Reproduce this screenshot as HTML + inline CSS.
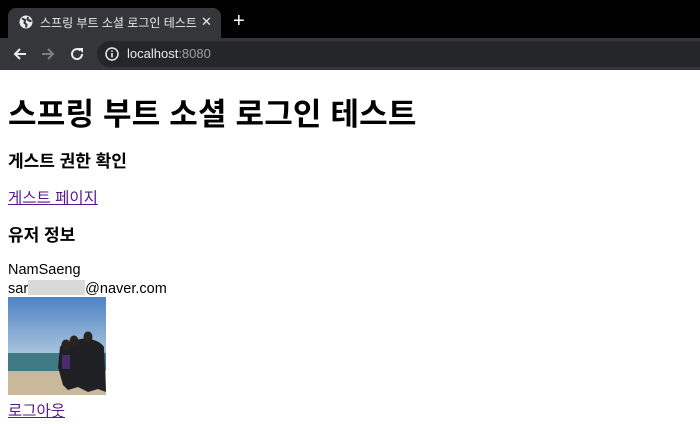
<!DOCTYPE html>
<html><head><meta charset="utf-8"><style>
body{margin:0;width:700px;height:425px;overflow:hidden;background:#fff;font-family:"Liberation Sans","Noto Sans CJK KR",sans-serif;position:relative}
.a{position:absolute;white-space:nowrap}
.tabbar{position:absolute;left:0;top:0;width:700px;height:38px;background:#000}
.tab{position:absolute;left:8px;top:8px;width:213px;height:30px;background:#35363a;border-radius:8px 8px 0 0}
.toolbar{position:absolute;left:0;top:38px;width:700px;height:32px;background:#35363a}
.omni{position:absolute;left:97px;top:41px;width:620px;height:26px;background:#252629;border-radius:13px}
a{color:#551a8b}
</style></head><body>
<div class="tabbar"></div>
<div class="tab"></div>
<svg class="a" style="left:19px;top:15px" width="14" height="14" viewBox="0 0 14 14"><circle cx="7" cy="7" r="6.5" fill="#e8eaed"/><path d="M3 3.5 L6 5 L5.5 8 L7.5 9.5 L7 12.5 M9 2 L8.5 4.5 L11 6 L12.5 5.5" stroke="#35363a" stroke-width="2" fill="none"/></svg>
<div class="a" style="left:40px;top:14px;font-size:12px;color:#e8eaed">스프링 부트 소셜 로그인 테스트</div>
<div class="a" style="left:201px;top:14px;font-size:13px;color:#e8eaed">✕</div>
<div class="a" style="left:233px;top:11px;font-size:20px;color:#fff;line-height:20px">+</div>
<div class="toolbar"></div>
<div class="omni"></div>
<svg class="a" style="left:12px;top:46px" width="16" height="16" viewBox="0 0 16 16"><path d="M14 8H3M8 3L3 8L8 13" stroke="#e8eaed" stroke-width="2" fill="none"/></svg>
<svg class="a" style="left:40px;top:46px" width="16" height="16" viewBox="0 0 16 16"><path d="M2 8H13M8 3L13 8L8 13" stroke="#7c7d80" stroke-width="2" fill="none"/></svg>
<svg class="a" style="left:69px;top:46px" width="16" height="16" viewBox="0 0 16 16"><path d="M13 8A5 5 0 1 1 11.5 4.5" stroke="#e8eaed" stroke-width="2" fill="none"/><path d="M9 2H14V7Z" fill="#e8eaed"/></svg>
<svg class="a" style="left:105px;top:47px" width="14" height="14" viewBox="0 0 14 14"><circle cx="7" cy="7" r="6" stroke="#e8eaed" stroke-width="1.5" fill="none"/><path d="M7 6V10.5M7 3.5V5" stroke="#e8eaed" stroke-width="1.6"/></svg>
<div class="a" style="left:127px;top:46px;font-size:13px;color:#e8eaed">localhost<span style="color:#9aa0a6">:8080</span></div>
<div class="a" style="left:8px;top:89px;font-size:31px;font-weight:bold;color:#000;letter-spacing:0.2px">스프링 부트 소셜 로그인 테스트</div>
<div class="a" style="left:8px;top:147px;font-size:17px;font-weight:bold">게스트 권한 확인</div>
<div class="a" style="left:8px;top:186px;font-size:15.5px"><a href="#">게스트 페이지</a></div>
<div class="a" style="left:8px;top:221px;font-size:17px;font-weight:bold">유저 정보</div>
<div class="a" style="left:8px;top:262px;font-size:14.5px">NamSaeng</div>
<div class="a" style="left:8px;top:280px;font-size:14.5px">sar<span style="display:inline-block;width:57px;height:15px;background:#d9d9d9;vertical-align:-2px"></span>@naver.com</div>
<svg class="a" style="left:8px;top:297px" width="98" height="98" viewBox="0 0 98 98">
<defs><linearGradient id="s" x1="0" y1="0" x2="0" y2="1"><stop offset="0" stop-color="#4f82c4"/><stop offset="1" stop-color="#a9c4de"/></linearGradient></defs>
<rect width="98" height="57" fill="url(#s)"/>
<rect y="56" width="98" height="20" fill="#3f7a85"/>
<rect y="74" width="98" height="24" fill="#c9b89a"/>
<path d="M52 50Q56 44 64 46Q72 40 82 42Q92 44 96 50L98 95L90 92L80 95L70 90L60 93L55 88L50 70Z" fill="#1f2024"/>
<ellipse cx="66" cy="44" rx="4.5" ry="5.5" fill="#2a2420"/>
<ellipse cx="80" cy="40" rx="4.5" ry="5.5" fill="#2a2420"/>
<ellipse cx="58" cy="48" rx="4.5" ry="5.5" fill="#2a2420"/>
<rect x="54" y="58" width="8" height="14" fill="#4b2b6b"/>
</svg>
<div class="a" style="left:8px;top:399px;font-size:15.5px"><a href="#">로그아웃</a></div>
</body></html>
